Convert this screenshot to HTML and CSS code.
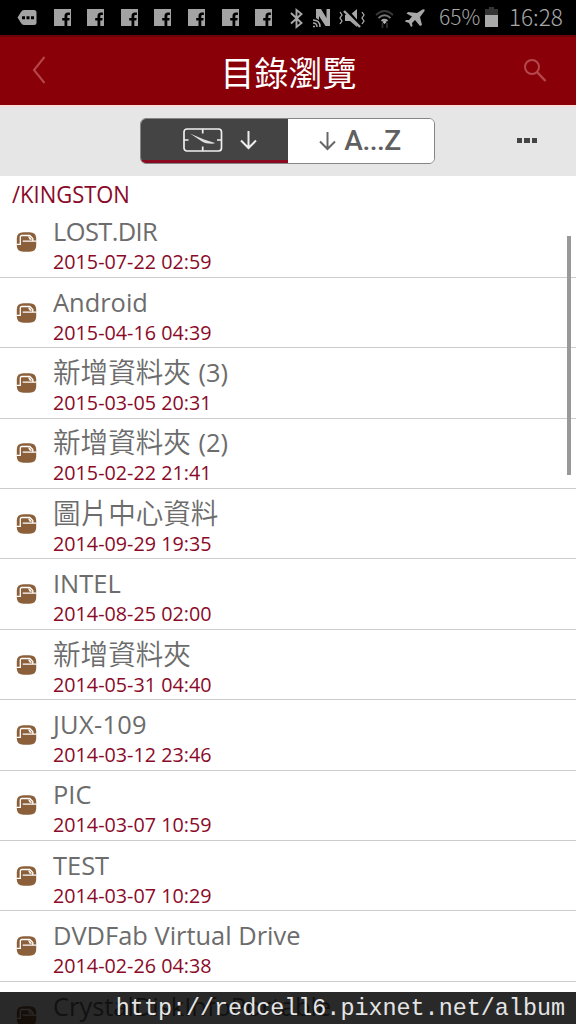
FILE: index.html
```html
<!DOCTYPE html>
<html lang="zh-Hant">
<head>
<meta charset="utf-8">
<title>目錄瀏覽</title>
<link rel="stylesheet" href="styles.css">
</head>
<body>
<svg class="defs" width="0" height="0">
  <symbol id="fb" viewBox="0 0 17 17"><path fill="#a3a3a3" d="M0 0h17v17h-3.700v-5.600h2l.4-2.500h-2.400V7.300c0-.9.4-1.400 1.400-1.400h1.200V3.500h-2c-2.200 0-3.400 1.300-3.400 3.400v2H8.200v2.500h2.300V17H0z"/></symbol>
  <symbol id="folder" viewBox="0 0 20 20"><path fill="#8b5f39" d="M7 .3h6q6.700 0 6.700 6.200v7q0 6.200-6.700 6.200H7Q.3 19.700.3 13.500v-7Q.3.300 7 .3z"/><path fill="none" stroke="#fff" stroke-width="1.300" d="M0 12.300h3.800V5q0-1.500 1.500-1.500h8l3 3v2.600M6.200 9.100H20"/><path fill="#fff" d="M11.500 4.500h1.500l2.500 3.300h-2.200z"/></symbol>
</svg>
<div class="screen">
  <header class="status">
    <div class="notices">
      <svg width="20" height="16" viewBox="0 0 20 16"><path fill="#a3a3a3" d="M7 0h10q2.500 0 2.500 2.500v10Q19.500 15 17 15H7Q5 15 4 13L.5 7.500 4 2Q5 0 7 0z"/><path d="M5 6.200h3v3H5zM9.500 6.200h3v3h-3zM14 6.200h3v3h-3z"/></svg>
      <svg><use href="#fb"/></svg><svg><use href="#fb"/></svg><svg><use href="#fb"/></svg><svg><use href="#fb"/></svg><svg><use href="#fb"/></svg><svg><use href="#fb"/></svg><svg><use href="#fb"/></svg>
    </div>
    <svg class="indicators" width="140" height="22" viewBox="288 6 140 22" fill="none" stroke="#a8a8a8">
      <path stroke-width="1.900" d="m291 12 10.500 10-5 4V9l5 4L291 22.500"/>
      <path stroke="none" fill="#a8a8a8" d="M316 8h5l5.500 9V8h3.500v17h-4.500L319 15v4l-3-2z"/>
      <path stroke-width="1.500" d="M313 25.500h2M313 22q4 0 4 4M313 19q7 0 7 7"/>
      <path fill="#a8a8a8" stroke="none" d="M345 14h5l7-6v18l-7-6h-5z"/>
      <path stroke="#000" stroke-width="4" d="m346 9 14 16"/><path stroke-width="2.400" d="m344 10 16 16"/>
      <path stroke-width="1.300" d="m340 11 2 3-2 3 2 3-2 3M362 11l2 3-2 3 2 3-2 3"/>
      <path stroke="#383838" stroke-width="1.800" d="M376 14q8.500-8 17 0"/><path stroke="#777" stroke-width="1.700" d="M378.500 17q6-5.500 12 0"/><path stroke-width="1.700" d="M381.500 20q3-2.500 6 0"/><path fill="#c0c0c0" stroke="none" d="m382.500 21 2-1.500 2 1.500-2 2z"/><path stroke="#303030" stroke-width="1.700" d="M382.500 27v-5M387 22v5"/>
      <path fill="#a8a8a8" stroke="none" d="m408 11 9 1 5.500-3.500q3-1 2 1.500L420 16l2 8-2 1-5-6-3 3 .5 3-1.500 1-2-4-4-1.500 1-1.500h3l3-3.500-5.500-3z"/>
    </svg>
    <span class="percent">65%</span>
    <svg class="battery" width="13" height="20" viewBox="0 0 13 20"><path fill="#343434" d="M4 0h5v2h4v18H0V2h4z"/><path fill="#a9a9a9" d="M0 8h13v12H0z"/></svg>
    <span class="clock">16:28</span>
  </header>
  <nav class="titlebar">
    <svg class="back" width="14" height="30" viewBox="0 0 14 30"><path d="M12.500 2 2 15l10.500 13"/></svg>
    <h1>目錄瀏覽</h1>
    <svg width="24" height="26" viewBox="0 0 24 26"><circle cx="9" cy="9" r="7"/><path stroke-width="2.500" d="m14 14 8.500 9"/></svg>
  </nav>
  <div class="toolbar">
    <div class="sort">
      <button class="by-date">
        <svg width="40" height="26" viewBox="0 0 40 26" fill="none" stroke="#eee" stroke-width="1.700"><rect x="1" y="2" width="37.500" height="22" rx="3"/><path d="M19.700 2v4.500M19.700 24v-4.500M1 13h4.500M38.500 13H34"/><path fill="#ddd" stroke="none" d="m7 6.500 14 6 11 3.500-1 .6q-8 .4-12-2.200z"/></svg>
        <svg width="17" height="20" viewBox="0 0 17 20" fill="none" stroke="#eee" stroke-width="2"><path d="M8.500 1v17M1 10.500l7.500 7.500 7.500-7.500"/></svg>
      </button>
      <button class="by-name">
        <svg width="17" height="20" viewBox="0 0 17 20" fill="none" stroke="#666" stroke-width="2"><path d="M8.500 1v17M1 10.500l7.500 7.500 7.500-7.500"/></svg>
        <span>A...Z</span>
      </button>
    </div>
    <div class="more"><i></i><i></i><i></i></div>
  </div>
  <main class="browser">
    <p class="path"><span>/KINGSTON</span></p>
    <ul class="files">
      <li><svg><use href="#folder"/></svg><div><b class="tight">LOST.DIR</b><time>2015-07-22 02:59</time></div></li>
      <li><svg><use href="#folder"/></svg><div><b>Android</b><time>2015-04-16 04:39</time></div></li>
      <li><svg><use href="#folder"/></svg><div><b><em>新增資料夾</em> (3)</b><time>2015-03-05 20:31</time></div></li>
      <li><svg><use href="#folder"/></svg><div><b><em>新增資料夾</em> (2)</b><time>2015-02-22 21:41</time></div></li>
      <li><svg><use href="#folder"/></svg><div><b><em>圖片中心資料</em></b><time>2014-09-29 19:35</time></div></li>
      <li><svg><use href="#folder"/></svg><div><b>INTEL</b><time>2014-08-25 02:00</time></div></li>
      <li><svg><use href="#folder"/></svg><div><b><em>新增資料夾</em></b><time>2014-05-31 04:40</time></div></li>
      <li><svg><use href="#folder"/></svg><div><b class="loose">JUX-109</b><time>2014-03-12 23:46</time></div></li>
      <li><svg><use href="#folder"/></svg><div><b>PIC</b><time>2014-03-07 10:59</time></div></li>
      <li><svg><use href="#folder"/></svg><div><b>TEST</b><time>2014-03-07 10:29</time></div></li>
      <li><svg><use href="#folder"/></svg><div><b>DVDFab Virtual Drive</b><time>2014-02-26 04:38</time></div></li>
      <li><svg><use href="#folder"/></svg><div><b>CrystalDiskInfoPortable</b></div></li>
    </ul>
  </main>
  <div class="scrollbar"></div>
  <footer class="watermark">http://redcell6.pixnet.net/album</footer>
</div>
</body>
</html>
```
FILE: styles.css
```css
* { box-sizing: border-box; }
body { margin: 0; background: #fff; font-family: "Open Sans", "Noto Sans CJK TC", sans-serif; }
.defs { position: absolute; }
.screen { position: relative; width: 576px; height: 1024px; overflow: hidden; display: flex; flex-direction: column; }

.status { flex: none; height: 35px; padding-left: 17px; background: #000; display: flex; align-items: center; color: #a8a8a8; font: 22px/33px "Noto Sans CJK TC", sans-serif; }
.notices { width: 271px; display: flex; align-items: center; gap: 16.600px; }
.notices svg { flex: none; }
.notices svg + svg { width: 17px; height: 17px; }
.indicators { flex: none; }
.percent, .clock { height: 35px; font-weight: 300; white-space: nowrap; }
.percent { width: 46px; margin-left: 11px; font-size: 21px; }
.battery { margin-top: -2px; }
.clock { margin-left: 11px; font-size: 22.500px; }

.titlebar { flex: none; height: 70px; padding: 0 29px 0 32px; display: flex; align-items: center; justify-content: space-between; background: #8a0009; border-top: 2px solid #6d0007; }
.titlebar h1 { margin: 2px 0 0 8px; color: #fff; font: 400 34px/60px "Noto Sans CJK TC", sans-serif; }
.titlebar svg { fill: none; stroke: #b4474c; stroke-width: 2; }
.titlebar .back { margin-top: -2px; }

.toolbar { flex: none; height: 71px; padding: 0 39px 0 140px; border-top: 2px solid #f8dcda; background: #e6e6e6; display: flex; align-items: center; justify-content: space-between; }
.sort { width: 295px; height: 46px; margin-top: -2px; display: flex; border: 1.500px solid #858585; border-radius: 6px; background: #fff; overflow: hidden; }
.sort button { border: 0; padding: 0; display: flex; align-items: center; justify-content: center; }
.sort .by-date { width: 147px; gap: 17px; padding: 2px 0 0 11px; background: #444; border-bottom: 3px solid #8a0820; }
.sort .by-name { flex: 1; gap: 8px; padding: 1px 2px 0 0; background: #fff; color: #606060; font: 500 28px/42px Roboto, sans-serif; }
.by-name span { letter-spacing: -.5px; }
.more { display: flex; gap: 2px; margin-top: -2px; }
.more i { width: 5.500px; height: 5.500px; background: #444; }

.browser { flex: 1; overflow: hidden; }
.path { height: 31.500px; margin: 0; padding-left: 12px; color: #8a0a29; font-size: 23px; line-height: 36px; }
.path span { display: inline-block; transform: scaleX(.955); transform-origin: 0 50%; }
.files { margin: 0; padding: 0; list-style: none; }
.files li { height: 70.400px; padding-left: 16px; display: flex; align-items: center; gap: 16px; border-bottom: 1px solid #ccc; }
.files li > svg { flex: none; width: 21px; height: 20px; }
.files li > div { height: 70px; }
.files b { display: block; height: 39px; font-weight: 400; font-size: 26px; line-height: 48px; color: #6c6c6c; white-space: nowrap; transform: scaleX(.978); transform-origin: 0 50%; }
.files .tight { letter-spacing: -.6px; }
.files .loose { letter-spacing: .3px; }
.files em { display: inline-block; vertical-align: top; margin-right: 1px; font: 350 28.200px/46px "Noto Sans CJK TC", sans-serif; }
.files time { display: block; color: #8a0a29; font-size: 20px; line-height: 32px; white-space: nowrap; transform: scaleX(.987); transform-origin: 0 50%; }

.scrollbar { position: absolute; top: 236px; left: 567px; width: 4px; height: 239px; background: #999; }
.watermark { position: absolute; left: 0; right: 0; bottom: 0; height: 32px; padding-right: 11px; background: rgba(0, 0, 0, .84); color: #e4e4e4; text-align: right; font: 23.400px/34px "Liberation Mono", monospace; }
```
